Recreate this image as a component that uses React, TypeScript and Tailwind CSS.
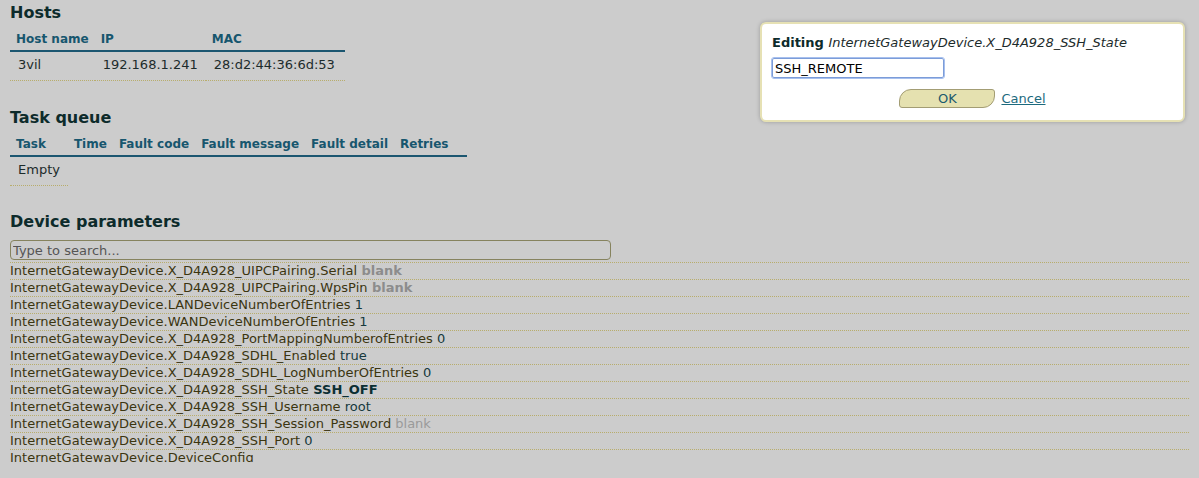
import React from "react";

const params: { path: string; value: string; kind?: "blankBold" | "bold" | "blank" }[] = [
  { path: "InternetGatewayDevice.X_D4A928_UIPCPairing.Serial", value: "blank", kind: "blankBold" },
  { path: "InternetGatewayDevice.X_D4A928_UIPCPairing.WpsPin", value: "blank", kind: "blankBold" },
  { path: "InternetGatewayDevice.LANDeviceNumberOfEntries", value: "1" },
  { path: "InternetGatewayDevice.WANDeviceNumberOfEntries", value: "1" },
  { path: "InternetGatewayDevice.X_D4A928_PortMappingNumberofEntries", value: "0" },
  { path: "InternetGatewayDevice.X_D4A928_SDHL_Enabled", value: "true" },
  { path: "InternetGatewayDevice.X_D4A928_SDHL_LogNumberOfEntries", value: "0" },
  { path: "InternetGatewayDevice.X_D4A928_SSH_State", value: "SSH_OFF", kind: "bold" },
  { path: "InternetGatewayDevice.X_D4A928_SSH_Username", value: "root" },
  { path: "InternetGatewayDevice.X_D4A928_SSH_Session_Password", value: "blank", kind: "blank" },
  { path: "InternetGatewayDevice.X_D4A928_SSH_Port", value: "0" },
  { path: "InternetGatewayDevice.DeviceConfig", value: "" },
];

function Th({ children }: { children?: React.ReactNode }) {
  return (
    <th className="px-[6px] pt-[4px] pb-[3px] text-left text-[12px] leading-[15px] font-bold text-[#17566e]">
      {children}
    </th>
  );
}

function Td({ children }: { children: React.ReactNode }) {
  return (
    <td className="px-[8px] pt-[5px] pb-[7px] leading-[16px] border-b border-dotted border-[#b8ad6c]">{children}</td>
  );
}

function valueClass(kind?: string) {
  if (kind === "blankBold") return "font-bold text-[#8c8c8c]";
  if (kind === "bold") return "font-bold text-[#0b2f33]";
  if (kind === "blank") return "text-[#9a9a9a]";
  return "text-[#16393d]";
}

export default function App() {
  return (
    <div className="relative min-h-screen bg-[#cccccc] px-[10px] pt-[3px] text-[13px] text-[#1c2b2b] font-['DejaVu_Sans',sans-serif]">
      {/* Hosts */}
      <h2 className="text-[16px] font-bold leading-[20px] text-[#0d2b2b]">Hosts</h2>
      <table className="mt-[5px] border-collapse">
        <thead>
          <tr className="border-b-2 border-[#1b5670]">
            <Th>Host name</Th>
            <Th>IP</Th>
            <Th>MAC</Th>
          </tr>
        </thead>
        <tbody>
          <tr>
            <Td>3vil</Td>
            <Td>192.168.1.241</Td>
            <Td>
              <span className="pr-[2px]">28:d2:44:36:6d:53</span>
            </Td>
          </tr>
        </tbody>
      </table>

      {/* Task queue */}
      <h2 className="mt-[27px] text-[16px] font-bold leading-[20px] text-[#0d2b2b]">Task queue</h2>
      <table className="mt-[5px] border-collapse">
        <thead>
          <tr className="border-b-2 border-[#1b5670]">
            <Th>Task</Th>
            <Th>Time</Th>
            <Th>Fault code</Th>
            <Th>Fault message</Th>
            <Th>Fault detail</Th>
            <Th>Retries</Th>
            <Th>
              <span className="inline-block w-[1px]" />
            </Th>
          </tr>
        </thead>
        <tbody>
          <tr>
            <Td>Empty</Td>
          </tr>
        </tbody>
      </table>

      {/* Device parameters */}
      <h2 className="mt-[26px] text-[16px] font-bold leading-[20px] text-[#0d2b2b]">Device parameters</h2>
      <input
        readOnly
        placeholder="Type to search..."
        className="mt-[8px] block h-[20px] w-[601px] rounded-[4px] border border-[#86835e] bg-[#cccccc] px-[2px] text-[13px] placeholder:text-[#555555] outline-none"
      />
      <div className="mt-[2px] h-[200px] overflow-hidden">
        {params.map((p) => (
          <div key={p.path} className="h-[17px] border-t border-dotted border-[#b8ad6c] leading-[16px] whitespace-nowrap">
            <span className="text-[#3b3510]">{p.path}</span>
            {p.value && <span className={valueClass(p.kind)}> {p.value}</span>}
          </div>
        ))}
      </div>

      {/* Edit popup */}
      <div className="absolute left-[760px] top-[22px] w-[425px] rounded-[6px] border-2 border-[#e6e1b4] bg-white px-[10px] pt-[10px] pb-[11px] shadow-[0_0_4px_rgba(0,0,0,0.25)]">
        <div className="leading-[18px]">
          <span className="font-bold text-[#0d2b2b]">Editing </span>
          <span className="italic text-[#1c2b2b]">InternetGatewayDevice.X_D4A928_SSH_State</span>
        </div>
        <input
          readOnly
          value="SSH_REMOTE"
          className="mt-[6px] block h-[20px] w-[172px] rounded-[2px] border border-[#7c9cd8] px-[2px] text-[13px] text-black outline outline-1 outline-[#a7c0ee]"
        />
        <div className="mt-[11px] flex items-center justify-center gap-[6px]">
          <button className="h-[19px] w-[96px] rounded-tl-[12px] rounded-br-[12px] rounded-tr-[3px] rounded-bl-[3px] border border-[#a39d74] bg-[#e5e1b0] text-[13px] leading-[17px] text-[#1b5a6e]">
            OK
          </button>
          <a className="text-[13px] text-[#1c6a7e] underline">Cancel</a>
        </div>
      </div>
    </div>
  );
}
